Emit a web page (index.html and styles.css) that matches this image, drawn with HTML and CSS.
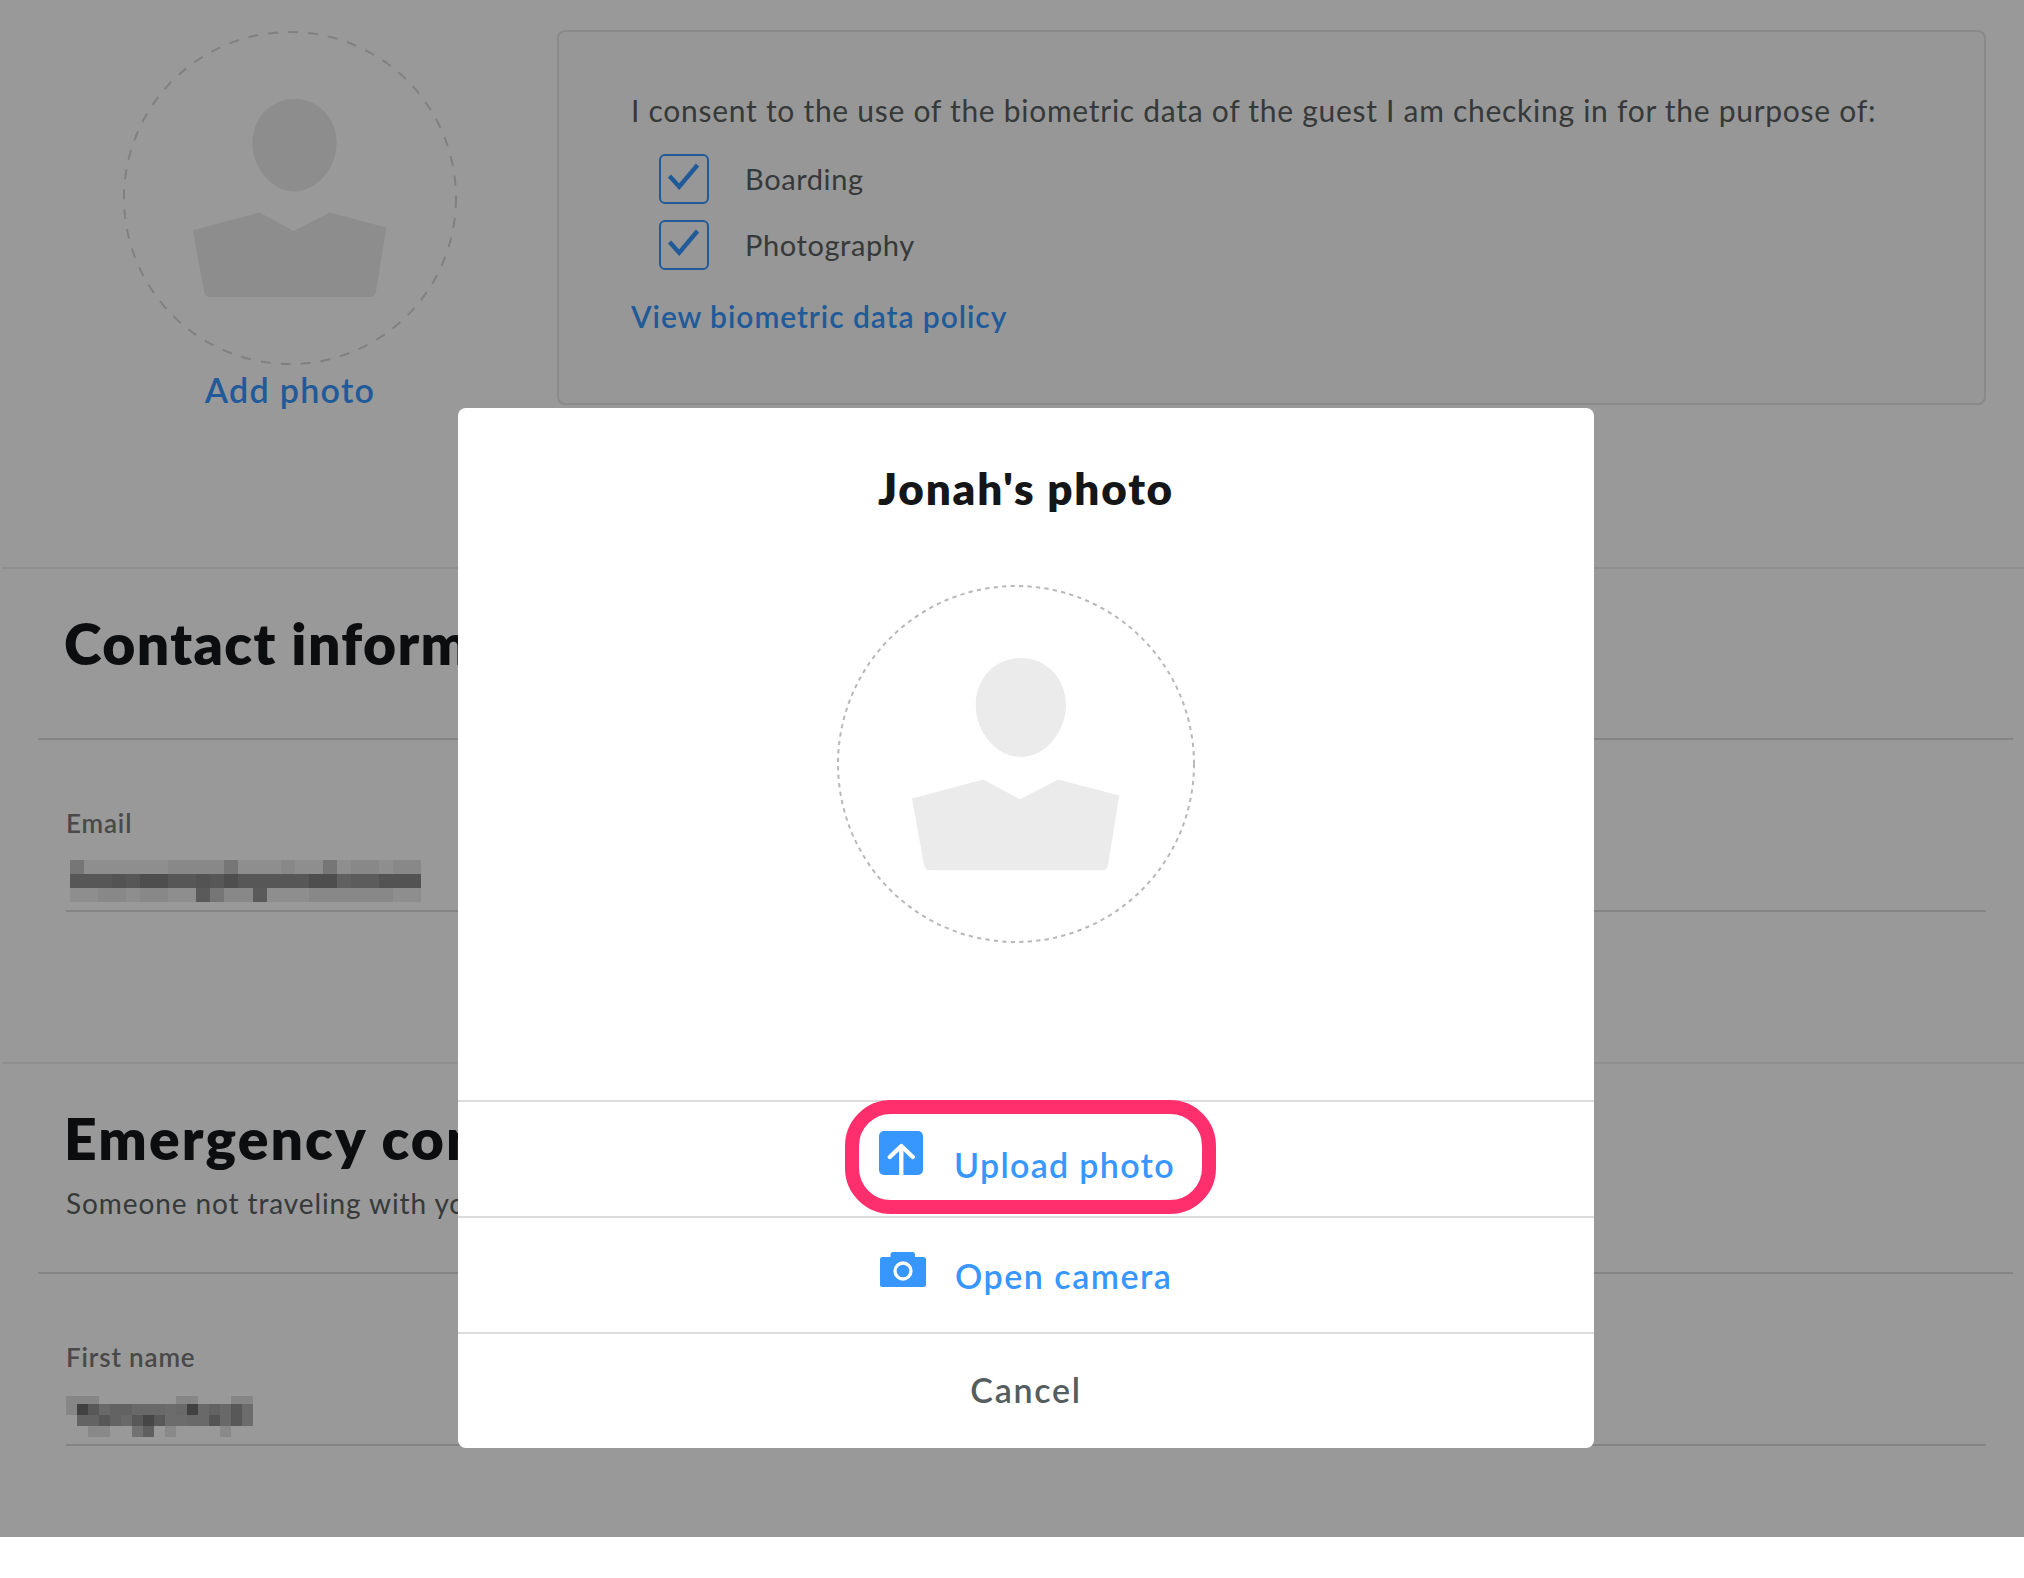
FILE: index.html
```html
<!DOCTYPE html>
<html lang="en">
<head>
    <meta charset="UTF-8">
    <meta name="viewport" content="width=device-width, initial-scale=1.0">
    <title>Guest check-in</title>
    <link rel="stylesheet" href="styles.css">
</head>
<body>

    <svg class="symbols" width="0" height="0">
        <symbol id="person" viewBox="0 0 358 358">
            <path d="M183.8 72.9c26 0 45.2 21 45.2 47 0 27-21 52-45.2 52s-45.1-25-45.1-52c0-26 19-47 45.1-47z"/>
            <path d="M75 213.5l71.3-19 36.7 19.8 38.3-19.8 61 16-11.2 69.2q-.8 5.5-6 5.5h-172q-5.2 0-6.2-5.5z"/>
        </symbol>
        <symbol id="check" viewBox="0 0 46 46">
            <path d="M8.5 20l9.7 10.7L36.5 9" fill="none" stroke="currentColor" stroke-width="4.4"/>
        </symbol>
    </svg>

    <div class="page">
        <section class="photo-section">
            <div class="photo">
                <svg class="avatar" viewBox="0 0 334 334">
                    <circle cx="167" cy="167" r="166" fill="none" stroke="#d6d6d6" stroke-width="2" stroke-dasharray="10 10"/>
                    <use href="#person" fill="#ebebeb"/>
                </svg>
                <a class="add-photo" href="#">Add photo</a>
            </div>
            <div class="consent">
                <p class="consent-text">I consent to the use of the biometric data of the guest I am checking in for the purpose of:</p>
                <div class="check-row">
                    <span class="checkbox"><svg><use href="#check"/></svg></span>
                    <span class="check-label">Boarding</span>
                </div>
                <div class="check-row">
                    <span class="checkbox"><svg><use href="#check"/></svg></span>
                    <span class="check-label">Photography</span>
                </div>
                <a class="policy-link" href="#">View biometric data policy</a>
            </div>
        </section>

        <section class="section">
            <div class="section-header">
                <h2>Contact information</h2>
            </div>
            <div class="field">
                <label>Email</label>
                <div class="value">
                    <!-- masked value -->
                    <svg class="mask-email" viewBox="0 0 27 4.5" preserveAspectRatio="none" shape-rendering="crispEdges">
                        <rect width="27" height="4.5" fill="#fff" opacity=".06"/>
                        <path opacity=".07" d="M1 1h25v1H1zM1 3h25v1H1z"/>
                        <path opacity=".43" d="M1 2h25v1H1z"/>
                        <path opacity=".17" d="M1 1h1v1h-1zM12 1h1v1h-1zM19 1h1v1h-1zM11 3h1v1h-1z"/>
                        <path opacity=".36" d="M10 3h1v1h-1zM14 3h1v1h-1z"/>
                        <path opacity=".1" d="M6 2h2v1h-2zM12 2h1v1h-1zM18 2h2v1h-2z"/>
                        <path opacity=".04" d="M4 2h1v1h-1zM10 2h1v1h-1zM23 2h3v1h-3zM8 1h4v1H8zM16 1h1v1h-1zM21 1h2v1h-2zM24 1h2v1h-2zM3 3h2v1h-2zM6 3h2v1h-2zM12 3h2v1h-2zM18 3h6v1h-6z"/>
                        <path fill="#fff" opacity=".15" d="M20 2h1v1h-1z"/>
                        <path fill="#fff" opacity=".08" d="M21 2h2v1h-2z"/>
                    </svg>
                </div>
            </div>
        </section>

        <section class="section">
            <div class="section-header with-subtitle">
                <h2>Emergency contact</h2>
                <p class="subtitle">Someone not traveling with you</p>
            </div>
            <div class="field">
                <label>First name</label>
                <div class="value">
                    <!-- masked value -->
                    <svg class="mask-name" viewBox="0 0 209 41" preserveAspectRatio="none" shape-rendering="crispEdges">
                        <path fill="#fff" opacity=".08" d="M0 8h11v11H0zM11 0h187v41H11zM198 8h11v22h-11z"/>
                        <path opacity=".12" d="M11 0h11v19H11zM22 0h22v8H22zM132 0h11v8h-11zM121 0h11v8h-11zM187 0h11v8h-11zM176 0h11v8h-11z"/>
                        <path opacity=".31" d="M22 8h176v22H22z"/>
                        <path opacity=".38" d="M22 8h11v11H22zM132 8h11v11h-11z"/>
                        <path opacity=".16" d="M33 8h11v11H33zM44 19h11v11H44zM77 19h33v11H77zM176 8h11v22h-11z"/>
                        <path opacity=".06" d="M55 8h22v11H55zM22 19h22v11H22zM154 8h11v11h-11zM55 19h11v11H55z"/>
                        <path opacity=".2" d="M88 19h11v11H88zM154 19h11v11h-11z"/>
                        <path fill="#fff" opacity=".06" d="M110 8h11v22h-11zM187 8h11v22h-11zM121 19h11v11h-11z"/>
                        <path opacity=".1" d="M44 30h11v11H44zM33 30h11v11H33zM110 30h11v11h-11zM165 30h11v11h-11z"/>
                        <path opacity=".26" d="M77 30h11v11H77z"/>
                        <path opacity=".38" d="M88 30h11v11H88z"/>
                    </svg>
                </div>
            </div>
        </section>

        <div class="overlay">
            <div class="modal">
                <h3>Jonah's photo</h3>
                <svg class="modal-avatar" viewBox="0 0 358 358">
                    <circle cx="179" cy="179" r="178" fill="none" stroke="#b8b8b8" stroke-width="2" stroke-dasharray="4.25 4.25"/>
                    <use href="#person" fill="#ebebeb"/>
                </svg>
                <div class="action upload">
                    <svg width="44" height="44" viewBox="0 0 44 44">
                        <rect width="44" height="44" rx="5" fill="#3797ff"/>
                        <path d="M22.3 44V16M10.8 26l11.5-11 11.5 11" fill="none" stroke="#fff" stroke-width="4.3" stroke-linecap="round" stroke-linejoin="round"/>
                    </svg>
                    <span>Upload photo</span>
                    <div class="highlight"></div>
                </div>
                <div class="action camera">
                    <svg width="46" height="35" viewBox="0 0 46 35">
                        <path d="M2.5 5h8V2.500Q10.500 0 13 0h20q2 0 2 2.500V5h8.500Q46 5 46 7.500v25q0 2.500-2.500 2.500h-41Q0 35 0 32.500v-25Q0 5 2.500 5z" fill="#3797ff"/>
                        <circle cx="23" cy="19" r="8" fill="none" stroke="#fff" stroke-width="3.3"/>
                    </svg>
                    <span>Open camera</span>
                </div>
                <div class="action cancel"><span>Cancel</span></div>
            </div>
        </div>
    </div>

</body>
</html>
```
FILE: styles.css
```css
* {
    box-sizing: border-box;
}
body {
    margin: 0;
    background-color: #fff;
    font-family: Lato, "Open Sans", sans-serif;
    font-kerning: normal;
}
h2, h3, p {
    margin: 0;
}
a {
    color: #3797ff;
    text-decoration: none;
    font-weight: 600;
}
.symbols {
    display: block;
}
.page {
    position: relative;
    height: 1537px;
    overflow: hidden;
    white-space: nowrap;
}

/* Photo and consent */
.photo-section {
    display: flex;
    height: 567px;
    padding: 30px 38px 0 123px;
}
.photo {
    display: flex;
    flex-direction: column;
    align-items: center;
    width: 334px;
    margin-right: 100px;
}
.avatar {
    width: 334px;
    height: 334px;
    margin: 1px 0 4px;
}
.add-photo {
    font-size: 34px;
    line-height: 42px;
    letter-spacing: 1.3px;
}
.consent {
    flex: 1;
    height: 375px;
    padding: 58px 60px 0 72px;
    border: 2px solid #e6e6e8;
    border-radius: 8px;
    background-color: #fcfcfc;
}
.consent-text {
    margin-bottom: 24px;
    font-size: 30px;
    line-height: 40px;
    letter-spacing: 0.72px;
    color: #5a5f62;
}
.check-row {
    display: flex;
    gap: 36px;
    margin: 0 0 16px 28px;
}
.checkbox {
    width: 50px;
    height: 50px;
    border: 2px solid #3797ff;
    border-radius: 6px;
    color: #3797ff;
}
.checkbox svg {
    display: block;
    width: 46px;
    height: 46px;
}
.check-label {
    font-size: 29px;
    line-height: 50px;
    letter-spacing: 0.6px;
    color: #5a5f62;
}
.policy-link {
    display: block;
    margin-top: 26px;
    font-size: 30px;
    line-height: 40px;
    letter-spacing: 0.93px;
}

/* Form sections */
.section {
    height: 495px;
    margin-left: 2px;
    border-top: 2px solid #eee;
}
.section-header {
    height: 171px;
    margin: 0 11px 0 36px;
    padding: 42px 0 0 28px;
    border-bottom: 2px solid #dcdcdc;
}
.section-header h2 {
    margin-left: -2px;
    font-size: 57px;
    font-weight: 800;
    line-height: 64px;
    letter-spacing: 1.4px;
    color: #141618;
}
.section-header.with-subtitle {
    height: 210px;
}
.section-header.with-subtitle h2 {
    letter-spacing: 2.1px;
}
.subtitle {
    margin-top: 15px;
    font-size: 28px;
    line-height: 36px;
    letter-spacing: 0.9px;
    color: #5a5f62;
}
.field {
    height: 172px;
    margin: 0 38px 0 64px;
    padding-top: 67px;
    border-bottom: 2px solid #dcdcdc;
}
.field label {
    display: block;
    font-size: 26px;
    font-weight: 600;
    line-height: 33px;
    letter-spacing: 0.85px;
    color: #7a7a7a;
}
.value {
    height: 70px;
}
.mask-email {
    display: block;
    width: 379px;
    height: 63px;
    margin: 6px 0 0 -10px;
}
.mask-name {
    display: block;
    width: 209px;
    height: 41px;
    margin: 22px 0 0 -11px;
}

/* Photo dialog */
.overlay {
    position: absolute;
    inset: 0;
    background-color: rgba(0, 0, 0, 0.4);
}
.modal {
    position: absolute;
    top: 408px;
    left: 458px;
    width: 1136px;
    height: 1040px;
    padding-top: 54px;
    border-radius: 8px;
    background-color: #fff;
}
.modal h3 {
    font-size: 44px;
    font-weight: 800;
    line-height: 52px;
    letter-spacing: 1.8px;
    text-align: center;
    color: #141618;
}
.modal-avatar {
    display: block;
    width: 358px;
    height: 358px;
    margin: 71px 0 157px 379px;
}
.action {
    position: relative;
    display: flex;
    align-items: flex-start;
    height: 116px;
    border-top: 2px solid #dcdcdc;
    font-size: 34px;
    font-weight: 600;
    line-height: 42px;
    letter-spacing: 1.3px;
    color: #3797ff;
}
.upload {
    gap: 31px;
    padding: 29px 0 0 421px;
}
.upload span {
    margin-top: 13px;
}
.camera {
    gap: 29px;
    padding: 34px 0 0 422px;
    letter-spacing: 1.5px;
}
.camera span {
    margin-top: 3px;
}
.cancel {
    justify-content: center;
    padding-top: 35px;
    letter-spacing: 1.7px;
    color: #555d5f;
}
.highlight {
    position: absolute;
    top: -2px;
    left: 387px;
    width: 371px;
    height: 114px;
    border: 14px solid #ff2f6d;
    border-radius: 46px;
}
```
